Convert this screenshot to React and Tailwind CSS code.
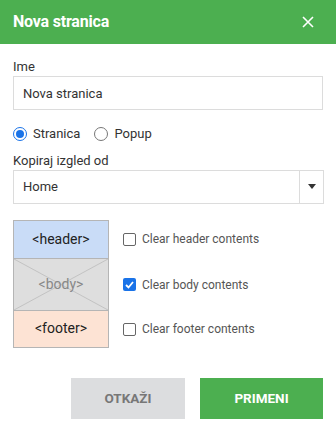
import React, { useState } from "react";

const App = () => {
  const [name, setName] = useState("Nova stranica");
  const [kind, setKind] = useState("page");
  const [clear, setClear] = useState({ header: false, body: true, footer: false });

  return (
    <div className="h-[431px] w-[336px] bg-white font-['Roboto',sans-serif] text-[#222]">
      <div className="flex h-[44px] items-center justify-between bg-[#4caf50] pl-[13px] pr-[22px]">
        <h2 className="text-[16px] font-bold tracking-[-0.2px] text-white">Nova stranica</h2>
        <svg width="12" height="12" viewBox="0 0 12 12" className="text-white">
          <path d="M1 1L11 11M11 1L1 11" stroke="currentColor" strokeWidth="1.6" />
        </svg>
      </div>

      <div className="px-[13px] pt-[15px]">
        <label className="block text-[13px] leading-[16px] text-[#333]">Ime</label>
        <input
          value={name}
          onChange={(e) => setName(e.target.value)}
          className="mt-[1px] h-[34px] w-full border border-[#dcdcdc] px-[9px] text-[13px] text-[#333] outline-none"
        />

        <div className="mt-[14px] flex items-center gap-[14px] text-[13px] text-[#333]">
          <label className="flex items-center gap-[6px]">
            <span className={`flex h-[14px] w-[14px] items-center justify-center rounded-full border ${kind === "page" ? "border-[#1a73e8]" : "border-[#777]"}`} onClick={() => setKind("page")}>
              {kind === "page" && <span className="h-[8px] w-[8px] rounded-full bg-[#1a73e8]" />}
            </span>
            Stranica
          </label>
          <label className="flex items-center gap-[6px]">
            <span className={`flex h-[14px] w-[14px] items-center justify-center rounded-full border ${kind === "popup" ? "border-[#1a73e8]" : "border-[#777]"}`} onClick={() => setKind("popup")}>
              {kind === "popup" && <span className="h-[8px] w-[8px] rounded-full bg-[#1a73e8]" />}
            </span>
            Popup
          </label>
        </div>

        <label className="mt-[9px] block text-[13px] leading-[16px] text-[#333]">Kopiraj izgled od</label>
        <div className="mt-[1px] flex h-[34px] w-[311px] border border-[#dcdcdc]">
          <div className="flex flex-1 items-center px-[9px] text-[13px] text-[#333]">Home</div>
          <div className="flex w-[24px] items-center justify-center border-l border-[#dcdcdc]">
            <svg width="8" height="5" viewBox="0 0 8 5"><path d="M0 0H8L4 5Z" fill="#333" /></svg>
          </div>
        </div>

        <div className="mt-[16px] flex">
          <div className="flex w-[96px] flex-col border border-[#b5b5b5] text-[14px]">
            <div className="flex h-[38px] items-center justify-center border-b border-[#b5b5b5] bg-[#c9dcf7] text-[#222]">&lt;header&gt;</div>
            <div className="relative flex h-[52px] items-center justify-center border-b border-[#b5b5b5] bg-[#dedede] text-[#888]">
              <svg className="absolute inset-0 h-full w-full" preserveAspectRatio="none" viewBox="0 0 96 52">
                <path d="M0 0L96 52M96 0L0 52" stroke="#c2c2c2" strokeWidth="1" />
              </svg>
              <span className="relative">&lt;body&gt;</span>
            </div>
            <div className="flex h-[36px] items-center justify-center bg-[#fde3d4] text-[#222]">&lt;footer&gt;</div>
          </div>

          <div className="ml-[14px] flex flex-col text-[12px] text-[#555]">
            {[
              ["header", "Clear header contents", "h-[39px]"],
              ["body", "Clear body contents", "h-[52px]"],
              ["footer", "Clear footer contents", "h-[37px]"],
            ].map(([key, text, h]) => (
              <label key={key} className={`flex items-center gap-[6px] ${h}`} onClick={() => setClear((c) => ({ ...c, [key]: !c[key] }))}>
                {clear[key] ? (
                  <span className="flex h-[13px] w-[13px] items-center justify-center rounded-[2px] bg-[#1a73e8]">
                    <svg width="9" height="8" viewBox="0 0 9 8"><path d="M1 4L3.5 6.5L8 1" stroke="white" strokeWidth="1.8" fill="none" /></svg>
                  </span>
                ) : (
                  <span className="h-[13px] w-[13px] rounded-[2px] border border-[#666]" />
                )}
                {text}
              </label>
            ))}
          </div>
        </div>

        <div className="mt-[30px] flex justify-end gap-[15px]">
          <button className="h-[41px] w-[114px] bg-[#dcdddf] text-[13.5px] font-bold text-[#777]">OTKAŽI</button>
          <button className="h-[41px] w-[123px] bg-[#4caf50] text-[13.5px] font-bold text-white">PRIMENI</button>
        </div>
      </div>
    </div>
  );
};

export default App;
